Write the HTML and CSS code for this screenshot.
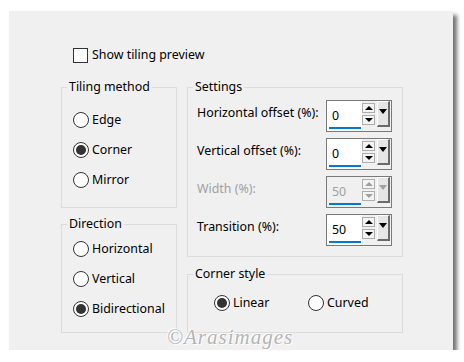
FILE: index.html
```html
<!DOCTYPE html>
<html>
	<head>
		<meta charset="UTF-8">
		<title>Tiling</title>
		<link rel="stylesheet" href="styles.css">
	</head>
	<body>
		<div class="dialog">
			<label class="check"><span class="box"></span>Show tiling preview</label>

			<div class="cols">
				<div class="col left">
					<fieldset class="grp tiling">
						<legend>Tiling method</legend>
						<div class="radio"><span class="dot"></span>Edge</div>
						<div class="radio on"><span class="dot"></span>Corner</div>
						<div class="radio"><span class="dot"></span>Mirror</div>
					</fieldset>
					<fieldset class="grp direction">
						<legend>Direction</legend>
						<div class="radio"><span class="dot"></span>Horizontal</div>
						<div class="radio"><span class="dot"></span>Vertical</div>
						<div class="radio on"><span class="dot"></span>Bidirectional</div>
					</fieldset>
				</div>

				<div class="col right">
					<fieldset class="grp settings">
						<legend>Settings</legend>
						<div class="field">
							<span class="lbl">Horizontal offset (%):</span>
							<div class="spin">
								<div class="edit"><span class="val">0</span></div>
								<div class="steps"><span class="step up"></span><span class="step down"></span></div>
								<span class="drop"></span>
							</div>
						</div>
						<div class="field">
							<span class="lbl">Vertical offset (%):</span>
							<div class="spin">
								<div class="edit"><span class="val">0</span></div>
								<div class="steps"><span class="step up"></span><span class="step down"></span></div>
								<span class="drop"></span>
							</div>
						</div>
						<div class="field off">
							<span class="lbl">Width (%):</span>
							<div class="spin">
								<div class="edit"><span class="val">50</span></div>
								<div class="steps"><span class="step up"></span><span class="step down"></span></div>
								<span class="drop"></span>
							</div>
						</div>
						<div class="field">
							<span class="lbl">Transition (%):</span>
							<div class="spin">
								<div class="edit"><span class="val">50</span></div>
								<div class="steps"><span class="step up"></span><span class="step down"></span></div>
								<span class="drop"></span>
							</div>
						</div>
					</fieldset>
					<fieldset class="grp corner">
						<legend>Corner style</legend>
						<div class="row">
							<div class="radio on"><span class="dot"></span>Linear</div>
							<div class="radio"><span class="dot"></span>Curved</div>
						</div>
					</fieldset>
				</div>
			</div>

			<div class="mark">©Arasimages</div>
		</div>
	</body>
</html>
```

FILE: styles.css
```css
* {
	box-sizing: border-box;
}

body {
	margin: 0;
	padding: 11px 0 0 9px;
	background-color: #fff;
	font-family: "Noto Sans", sans-serif;
	font-size: 12.4px;
	line-height: 16px;
	color: #000;
}

.dialog {
	position: relative;
	width: 444px;
	height: 339px;
	background-color: #f0f0f0;
	padding: 36px 50px 0 52px;
	box-shadow: 4px 4px 4px rgba(0, 0, 0, 0.55);
}

/* checkbox */
.check {
	display: flex;
	align-items: center;
	gap: 4px;
	height: 16px;
	margin-left: 12px;
}

.check .box {
	width: 15px;
	height: 15px;
	border: 1px solid #333;
	background-color: #fff;
}

.cols {
	display: flex;
	gap: 10px;
	margin-top: 16px;
}

.col {
	display: flex;
	flex-direction: column;
}

.left {
	width: 116px;
	gap: 8px;
}

.right {
	width: 216px;
	gap: 9px;
}

/* group boxes */
.grp {
	margin: 0;
	padding: 0;
	min-width: 0;
	border: 1px solid #dcdcdc;
}

.grp legend {
	margin-left: 5px;
	padding: 0 2px;
	line-height: 16px;
}

.tiling {
	padding: 10px 0 12px 0;
}

.direction {
	padding: 2px 0 8px 0;
}

.tiling .radio,
.direction .radio {
	margin-left: 11px;
}

.settings {
	padding: 5px 10px 10px 0;
}

.corner {
	padding: 6px 0 14px 0;
}

/* radios */
.radio {
	display: flex;
	align-items: center;
	gap: 3px;
	height: 30px;
}

.dot {
	width: 16px;
	height: 16px;
	border: 1px solid #333;
	border-radius: 50%;
	background-color: #fff;
	display: flex;
	align-items: center;
	justify-content: center;
}

.radio.on .dot::after {
	content: "";
	width: 10px;
	height: 10px;
	border-radius: 50%;
	background-color: #333;
}

.row {
	display: flex;
	padding-left: 26px;
}

.row .radio {
	width: 97px;
}

/* spin fields */
.field {
	display: flex;
	justify-content: space-between;
	align-items: flex-start;
	height: 32px;
}

.field + .field {
	margin-top: 6px;
}

.lbl {
	margin-top: 5px;
	padding-left: 9px;
}

.spin {
	display: flex;
	width: 66px;
	height: 32px;
	border: 1px solid #7a7a7a;
	background-color: #f0f0f0;
}

.edit {
	width: 35px;
	display: flex;
	padding: 4px 1px 2px 2px;
	background-color: #fff;
}

.val {
	flex: 1;
	display: flex;
	align-items: center;
	padding-left: 3px;
	border-bottom: 2px solid #0078d7;
}

.steps {
	display: flex;
	flex-direction: column;
	gap: 2px;
	width: 13px;
	margin-top: 2px;
}

.step {
	height: 10px;
	border: 1px solid #adadad;
	background-color: #f4f4f4;
	display: flex;
	align-items: center;
	justify-content: center;
}

.step::after {
	content: "";
	border-left: 4px solid transparent;
	border-right: 4px solid transparent;
}

.up::after {
	border-bottom: 4px solid #000;
}

.down::after {
	border-top: 4px solid #000;
}

.drop {
	width: 13px;
	height: 26px;
	margin-left: 2px;
	border-top: 1px solid #fff;
	border-left: 1px solid #fff;
	border-right: 2px solid #6a6a6a;
	border-bottom: 2px solid #6a6a6a;
	background-color: #e6e6e6;
	display: flex;
	justify-content: center;
	padding-top: 7px;
}

.drop::after {
	content: "";
	height: 0;
	border-left: 4px solid transparent;
	border-right: 4px solid transparent;
	border-top: 5px solid #000;
}

.off .lbl,
.off .val {
	color: #a0a0a0;
}

.off .edit {
	background-color: #f0f0f0;
}

.off .up::after {
	border-bottom-color: #a0a0a0;
}

.off .down::after,
.off .drop::after {
	border-top-color: #a0a0a0;
}

/* watermark */
.mark {
	position: absolute;
	left: 158px;
	top: 314px;
	font-family: "Liberation Serif", serif;
	font-style: italic;
	font-size: 21px;
	line-height: 24px;
	color: #b4b4b4;
	text-shadow: 1px 1px 0 #fff, -1px -1px 0 #fff;
	letter-spacing: 1px;
}
```
